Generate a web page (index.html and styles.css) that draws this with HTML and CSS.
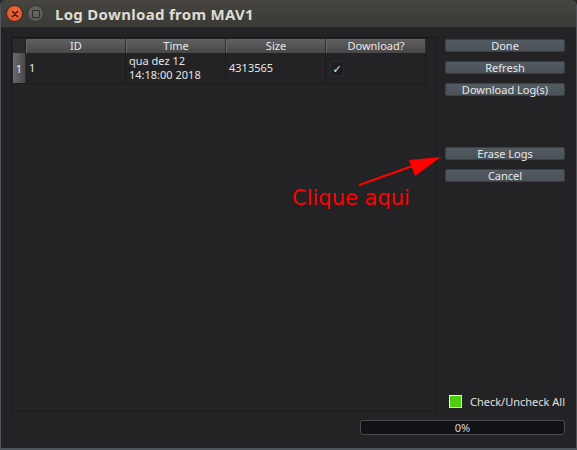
FILE: index.html
```html
<!DOCTYPE html>
<html>
<head>
<meta charset="utf-8">
<link rel="stylesheet" href="styles.css">
</head>
<body>
<div class="window">
  <div class="titlebar">
    <div class="wbtn close"><svg width="14" height="14" viewBox="0 0 14 14"><path d="M4.5 4.5 L9.5 9.5 M9.5 4.5 L4.5 9.5" stroke="#3a1a10" stroke-width="1.6" stroke-linecap="round"/></svg></div>
    <div class="wbtn mini"><span class="sq"></span></div>
    <div class="title">Log Download from MAV1</div>
  </div>
  <div class="content">
    <div class="main">
      <div class="frame">
        <div class="table">
          <div class="thead">
            <div class="corner"></div>
            <div class="th">ID</div>
            <div class="th">Time</div>
            <div class="th">Size</div>
            <div class="th">Download?</div>
          </div>
          <div class="trow">
            <div class="rowhead">1</div>
            <div class="td">1</div>
            <div class="td">qua dez 12<br>14:18:00 2018</div>
            <div class="td">4313565</div>
            <div class="td"><span class="chk">✓</span></div>
          </div>
        </div>
      </div>
      <div class="side">
        <div class="btn">Done</div>
        <div class="btn">Refresh</div>
        <div class="btn">Download Log(s)</div>
        <div class="btn gap">Erase Logs</div>
        <div class="btn">Cancel</div>
        <div class="spacer"></div>
        <div class="checkall"><span class="green"></span><span class="label">Check/Uncheck All</span></div>
      </div>
    </div>
    <div class="bottom">
      <div class="progress">0%</div>
    </div>
  </div>
  <svg class="annot" width="577" height="450" viewBox="0 0 577 450">
    <line x1="358" y1="185" x2="420" y2="163" stroke="#ff0000" stroke-width="2"/>
    <polygon points="440,157 408,160 414,176" fill="#ff0000"/>
  </svg>
  <div class="note">Clique aqui</div>
</div>
</body>
</html>
```
FILE: styles.css
```css
html, body {
  margin: 0;
  padding: 0;
  background: #2b2b2b;
}
.window {
  position: relative;
  width: 577px;
  height: 450px;
  display: flex;
  flex-direction: column;
  background: #232325;
  font-family: "Noto Sans", "DejaVu Sans", sans-serif;
  color: #e4e4e4;
  overflow: hidden;
  border-left: 1px solid #4e555b;
  border-right: 1px solid #4e555b;
  border-bottom: 2px solid #4e555b;
  box-sizing: border-box;
  border-radius: 6px 6px 0 0;
}
.titlebar {
  height: 28px;
  flex: none;
  display: flex;
  align-items: center;
  background: linear-gradient(#47453f, #3b3a36);
  border-bottom: 1px solid #2a2a28;
  box-sizing: border-box;
  padding-left: 6px;
  margin-left: -1px;
  margin-right: -1px;
}
.wbtn {
  width: 16px;
  height: 16px;
  border-radius: 50%;
  display: flex;
  align-items: center;
  justify-content: center;
  margin-right: 4px;
}
.close {
  background: radial-gradient(circle at 50% 40%, #f26d43, #df4a1f);
  border: 1px solid #3a2a20;
  width: 15px;
  height: 15px;
}
.mini {
  background: radial-gradient(circle at 50% 40%, #6a6863, #55534f);
  border: 1px solid #33322f;
  width: 15px;
  height: 15px;
}
.sq {
  width: 6px;
  height: 6px;
  border: 1.5px solid #2d2c2a;
  border-radius: 1px;
}
.title {
  margin-left: 7px;
  font-weight: bold;
  font-size: 15px;
  color: #dfdbd2;
  letter-spacing: 0.3px;
}
.content {
  flex: 1;
  display: flex;
  flex-direction: column;
  padding: 9px 11px 13px 10px;
}
.main {
  flex: 1;
  display: flex;
}
.frame {
  width: 426px;
  box-sizing: border-box;
  border: 1px solid #19191a;
  padding: 1px;
  background: #232325;
}
.table {
  width: 413px;
  font-size: 11px;
}
.thead {
  display: flex;
  height: 14px;
}
.corner {
  width: 13px;
  background: #2a2a2c;
  border-right: 1px solid #1d1d1e;
  box-sizing: border-box;
}
.th {
  width: 100px;
  box-sizing: border-box;
  background: linear-gradient(#606060, #484848);
  border-right: 1px solid #2e2e2e;
  border-left: 1px solid #6a6a6a;
  text-align: center;
  line-height: 13px;
  color: #e8e8e8;
}
.trow {
  display: flex;
  height: 30px;
  border-bottom: 1px solid #1b1b1c;
}
.rowhead {
  width: 13px;
  background: linear-gradient(90deg, #6a6a6a, #4a4a4a);
  display: flex;
  align-items: center;
  justify-content: center;
  color: #eeeeee;
  border-right: 1px solid #2e2e2e;
  box-sizing: border-box;
}
.td {
  width: 100px;
  box-sizing: border-box;
  border-right: 1px solid #1b1b1c;
  padding-left: 3px;
  display: flex;
  align-items: center;
  line-height: 14px;
  color: #e6e6e6;
}
.chk {
  display: inline-block;
  width: 12px;
  height: 13px;
  border: 1px solid #2c2c2e;
  background: #1e1e20;
  text-align: center;
  font-size: 11px;
  line-height: 13px;
  margin-left: 1px;
  font-weight: bold;
}
.side {
  width: 120px;
  margin-left: 8px;
  display: flex;
  flex-direction: column;
  padding-top: 2px;
}
.btn {
  height: 13px;
  box-sizing: border-box;
  background: linear-gradient(#535b62, #4a5258);
  border: 1px solid #3a4046;
  border-radius: 2px;
  font-size: 11px;
  line-height: 12px;
  text-align: center;
  color: #e8e8e8;
  margin-bottom: 9px;
}
.btn.gap {
  margin-top: 42px;
}
.spacer {
  flex: 1;
}
.checkall {
  display: flex;
  align-items: center;
  font-size: 11px;
  color: #e0e0e0;
  padding-left: 4px;
  margin-bottom: 3px;
  white-space: nowrap;
}
.label {
  white-space: nowrap;
}
.green {
  flex: none;
  width: 11px;
  height: 11px;
  background: #4ccd0d;
  border: 1px solid #f0f0f0;
  margin-right: 8px;
}
.bottom {
  display: flex;
  justify-content: flex-end;
  margin-top: 8px;
}
.progress {
  width: 205px;
  height: 15px;
  box-sizing: border-box;
  border: 1px solid #4a4a4c;
  border-radius: 3px;
  background: #121216;
  font-size: 11px;
  line-height: 13px;
  text-align: center;
  color: #d8d8d8;
}
.annot {
  position: absolute;
  left: 0;
  top: 0;
  pointer-events: none;
}
.note {
  position: absolute;
  left: 291px;
  top: 186px;
  font-family: "DejaVu Sans", sans-serif;
  font-size: 21px;
  color: #ff0000;
}
```
